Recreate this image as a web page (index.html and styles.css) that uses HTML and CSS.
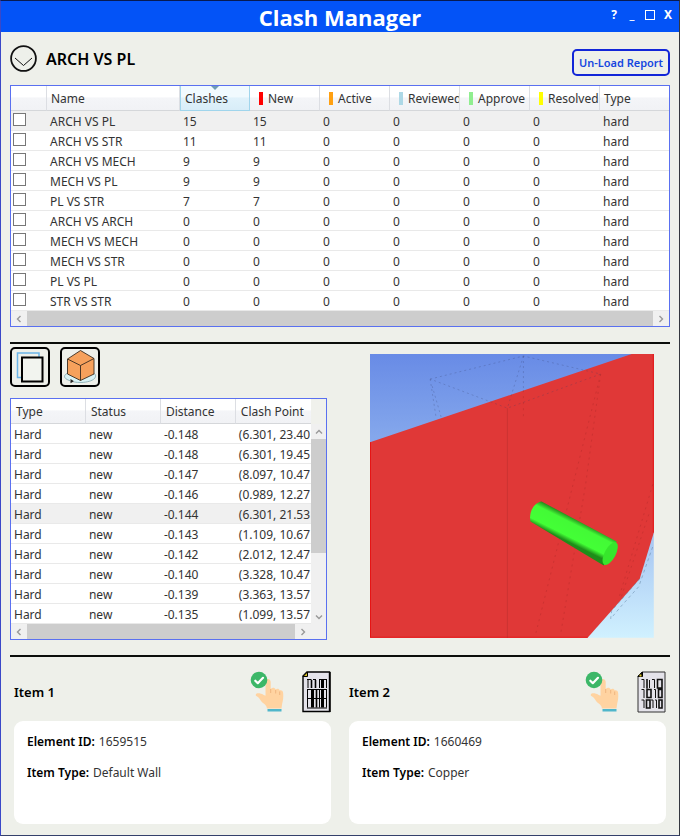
FILE: index.html
```html
<!DOCTYPE html>
<html lang="en">
<head>
<meta charset="utf-8">
<title>Clash Manager</title>
<link rel="stylesheet" href="styles.css">
<script src="app.js" defer></script>
</head>
<body>
<svg class="defs" aria-hidden="true">
  <defs>
    <symbol id="left" viewBox="0 0 8 8"><path d="M5.500 1 2.500 4l3 3"/></symbol>
    <symbol id="right" viewBox="0 0 8 8"><path d="M2.500 1l3 3-3 3"/></symbol>
    <symbol id="up" viewBox="0 0 8 8"><path d="M1 5.500l3-3 3 3"/></symbol>
    <symbol id="down" viewBox="0 0 8 8"><path d="M1 2.500l3 3 3-3"/></symbol>
    <symbol id="hand" viewBox="0 0 34 42">
      <path fill="#ffd3a1" d="M15.500 11c0-4 5-4 5.200 0v7c2-2 4-1.500 5 .5 1.500-1.500 3.500-1 4 1 1.500-.5 3.500 0 3.500 3 .3 4-.2 7-1 10l-.7 5H17c-.5-3-2-4-4-5.500-2-1.500-3-4-4.500-5.500-2-1.500-3-1.500-2.700-3 .5-2 5-1.500 7.500.2l2.200 1z"/>
      <path fill="none" stroke="#efb580" stroke-width="1" d="M20.700 18v4M25.700 19v3.500M29.700 20.500V24"/>
      <path fill="#4fb6cb" d="M17.500 38h14v2.500h-14z"/>
      <circle cx="9" cy="9" r="8.300" fill="#3cb768"/>
      <path fill="none" stroke="#fff" stroke-width="2.200" stroke-linecap="round" stroke-linejoin="round" d="M5.300 9.700l2.500 2.500 5.200-5.400"/>
    </symbol>
  </defs>
</svg>
<div class="window">
  <header class="titlebar">
    <h1>Clash Manager</h1>
    <div class="controls">
      <button type="button">?</button>
      <button type="button">_</button>
      <button type="button" aria-label="Maximize"><span class="square"></span></button>
      <button type="button">X</button>
    </div>
  </header>
  <main class="content">
    <section class="heading">
      <button type="button" class="expander" aria-label="Toggle list">
        <svg viewBox="0 0 28 28"><circle cx="13.500" cy="13.500" r="12.400" stroke-width="1.800"/><path stroke-width="1" d="M5 13l8.500 7.500L22 13"/></svg>
      </button>
      <h2>ARCH VS PL</h2>
      <button type="button" class="unload">Un-Load Report</button>
    </section>

    <section class="grid-box">
      <table class="tests">
        <colgroup><col class="c-check"><col class="c-name"><col class="c-num"><col class="c-num"><col class="c-num"><col class="c-num"><col class="c-num"><col class="c-num"><col></colgroup>
        <thead><tr><th></th><th>Name</th><th class="sorted">Clashes</th><th><i class="tag red"></i>New</th><th><i class="tag orange"></i>Active</th><th><i class="tag blue"></i>Reviewed</th><th><i class="tag green"></i>Approve</th><th><i class="tag yellow"></i>Resolved</th><th>Type</th></tr></thead>
        <tbody id="tests"></tbody>
      </table>
      <div class="hscroll"><button type="button" aria-label="Scroll left"><svg><use href="#left"/></svg></button><span class="thumb"></span><button type="button" aria-label="Scroll right"><svg><use href="#right"/></svg></button></div>
    </section>

    <hr>

    <section class="middle">
      <div class="results">
        <div class="tools">
          <button type="button" aria-label="Overlay view">
            <svg viewBox="0 0 36 36"><path fill="none" stroke="#6bb4e8" stroke-width="1.500" d="M9 28.500H5.500V4H27v4.500"/><path fill="#f2f4ef" stroke="#000" stroke-width="2" d="M10 8.500h20.500v24H10z"/></svg>
          </button>
          <button type="button" aria-label="Rotate model">
            <svg viewBox="0 0 36 36"><path fill="#d9f3f5" stroke="#7fa5ac" stroke-width=".8" d="M5 24.500c-3 1.500-3.500 4 0 6 5 2.500 9 3 14 3 6-.2 11-1.500 13.500-4 2-2.500 1-4.500-1.500-5.500z"/><path fill="none" stroke="#f4f6f1" stroke-width="1" d="M8 31.500l4 1.200"/><path fill="#222" d="m8.500 30 3.500 2.200-3.500 2z"/><path fill="#f6a15c" stroke="#3a2c20" stroke-width=".9" stroke-linejoin="round" d="M18.500 1.500 32 9.500V25l-13.500 6.500L5.500 25V10z"/><path fill="none" stroke="#3a2c20" stroke-width=".9" d="M5.500 10l13 6.500L32 9.500M18.500 16.500v15"/></svg>
          </button>
        </div>
        <div class="grid-box">
          <div class="scroll-row">
            <table class="clashes">
              <colgroup><col><col><col><col></colgroup>
              <thead><tr><th>Type</th><th>Status</th><th>Distance</th><th>Clash Point</th></tr></thead>
              <tbody id="clashes"></tbody>
            </table>
            <div class="vscroll"><button type="button" aria-label="Scroll up"><svg><use href="#up"/></svg></button><span class="track"><span class="thumb"></span></span><button type="button" aria-label="Scroll down"><svg><use href="#down"/></svg></button></div>
          </div>
          <div class="hscroll"><button type="button" aria-label="Scroll left"><svg><use href="#left"/></svg></button><span class="thumb"></span><button type="button" aria-label="Scroll right"><svg><use href="#right"/></svg></button><span class="corner"></span></div>
        </div>
      </div>
      <svg class="viewer" viewBox="0 0 283 283" role="img" aria-label="3D view of the clash">
        <defs>
          <linearGradient id="sky" x1="0" y1="0" x2="0" y2="1"><stop offset="0" stop-color="#688be6"/><stop offset=".3" stop-color="#85a8ec"/><stop offset=".68" stop-color="#abcaf3"/><stop offset="1" stop-color="#d0f1ff"/></linearGradient>
          <linearGradient id="pipe" gradientUnits="userSpaceOnUse" x1="210" y1="166" x2="199" y2="188"><stop offset="0" stop-color="#217d19"/><stop offset=".25" stop-color="#43fa36"/><stop offset=".8" stop-color="#43ff36"/><stop offset="1" stop-color="#1f8d19"/></linearGradient>
        </defs>
        <path fill="url(#sky)" d="M0 0h283v283H0z"/>
        <path fill="#e03837" d="M0 88 261 0h22v178l-14 46-52 59H0z"/>
        <path fill="none" stroke="#e61414" stroke-width="1" d="M.5 88v194.500H217M282.500 0v178"/>
        <g fill="none" stroke="#333b66" stroke-width=".6" stroke-dasharray="2 3" opacity=".4">
          <path d="M60 25 153 2l77 18-93 34zM60 25l6 39M62 32l9 31M153 2v34M153 2l-16 52"/>
        </g>
        <g fill="none" stroke="#8f2020" stroke-width=".8" opacity=".3">
          <path d="M137 54v229"/>
          <path stroke-dasharray="2 4" d="M230 20l-65 260M230 20l-15 110-25 150M282 130l-34 114M278 160l-28 84M153 36v30"/>
        </g>
        <path fill="none" stroke="#5d7f9e" stroke-width=".8" stroke-dasharray="3 3" opacity=".6" d="m269 224-28 32-1 8 10-12 18-20 14-40"/>
        <path fill="url(#pipe)" d="m171 147 75 40-13 24-73-44c-2-10 4-19 11-20z"/>
        <ellipse cx="239.500" cy="199" rx="5.500" ry="12.500" transform="rotate(28 239.500 199)" fill="#37e62c"/>
      </svg>
    </section>

    <hr>

    <section class="items">
      <article class="item">
        <header>
          <h3>Item 1</h3>
          <button type="button" class="pick" aria-label="Select item 1"><svg><use href="#hand"/></svg></button>
          <button type="button" class="sheet" aria-label="Item 1 properties">
            <svg viewBox="0 0 29 42"><path fill="#e4e3ea" stroke="#000" stroke-width="1.400" d="M5 1h22.500v39.500H1V5z"/><path fill="#d8c321" stroke="#000" stroke-width="1" d="M1 5.500 5.500 1v4.500z"/><path stroke="#000" stroke-width="1.500" d="M28 1v40"/><g fill="none" stroke="#000"><path d="M5 8.500h4.500M11 8.500h3M17 8.500h8M5 18.500h20M5 27.500h20M5 37h20"/><path d="M6 9v8M17.500 9v8M5.500 19v8M17.500 19v8M5.500 28v8.500M17.500 28v8.500M24.500 9v8M24.500 19v8M24.500 28v8.500"/><path stroke-width="1.600" d="M9.500 9v8M13.500 9v8M14.500 19v8M14.500 28v8.500"/><path stroke-width="3" d="M20.500 9v8M10.500 19v8M20.500 19v8M10.500 28v8.500M20.500 28v8.500"/></g></svg>
          </button>
        </header>
        <dl class="card"><div><dt>Element ID:</dt> <dd>1659515</dd></div><div><dt>Item Type:</dt> <dd>Default Wall</dd></div></dl>
      </article>
      <article class="item">
        <header>
          <h3>Item 2</h3>
          <button type="button" class="pick" aria-label="Select item 2"><svg><use href="#hand"/></svg></button>
          <button type="button" class="sheet" aria-label="Item 2 properties">
            <svg viewBox="0 0 29 42"><path fill="#e4e3ea" stroke="#333" stroke-width="1" d="M5 1h23v40H1V5z"/><path fill="#000" stroke="#000" d="M1 5.500 5.500 1v4.500z"/><path fill="#d8c321" d="M2.500 3.500h2v2h-2z"/><g fill="none" stroke="#111"><path stroke-width="1" d="M4.500 8.500H7V17M15 8.500h2.500V17M4.500 18.500H7V27M17 18.500h1.500V27M4.500 29H7v8M14 29h2v8M18 29h1.500v8M12.500 9v8"/><path stroke-width="1.600" d="M10 8v9.500M20.500 8.500H25V17h-4.500zM10 18.500h4v8h-4zM21.500 18.500H25v8h-3.500zM9.500 29H13v8H9.500zM22 29h3v8h-3z"/></g></svg>
          </button>
        </header>
        <dl class="card"><div><dt>Element ID:</dt> <dd>1660469</dd></div><div><dt>Item Type:</dt> <dd>Copper</dd></div></dl>
      </article>
    </section>
  </main>
</div>
</body>
</html>
```
FILE: styles.css
```css
* { box-sizing: border-box; }
body {
  margin: 0;
  font-family: "Noto Sans", "Open Sans", sans-serif;
  font-size: 12px;
  line-height: 16px;
  color: #333;
  background: #eef0ea;
}
h1, h2, h3, dl, dd { margin: 0; }
button { margin: 0; padding: 0; border: 0; background: none; font: inherit; color: inherit; }
svg { display: block; }
.defs { position: absolute; width: 0; height: 0; }

.window {
  min-height: 100vh;
  border: 1px solid #33363f;
  border-top-color: #071a52;
  border-left-color: #3a48c8;
  border-bottom-color: #34406b;
}
.titlebar {
  position: relative;
  height: 31px;
  background: #0353f7;
  color: #fff;
  text-align: center;
}
.titlebar h1 { font-family: "Open Sans", sans-serif; font-size: 22px; line-height: 32px; font-weight: 700; }
.controls { position: absolute; top: 4px; right: 2px; display: flex; font-weight: 700; }
.controls button { width: 18px; height: 20px; display: grid; place-items: center; }
.square { width: 10px; height: 10px; border: 1px solid #fff; }

.content { padding: 0 9px; }
.heading { display: flex; align-items: center; height: 53px; }
.expander svg { width: 28px; height: 28px; fill: none; stroke: #111; }
.heading h2 { margin-left: 8px; font-size: 16px; line-height: 20px; font-weight: 600; color: #000; }
.unload {
  width: 98px;
  height: 27px;
  margin: 8px 0 0 auto;
  border: 2px solid #1226d8;
  border-radius: 5px;
  color: #1546e0;
  font-size: 11px;
  font-weight: 600;
  white-space: nowrap;
}

.grid-box { border: 1px solid #5a70f0; background: #fff; }
table { width: 100%; border-collapse: separate; border-spacing: 0; table-layout: fixed; }
th, td { padding: 2px 3px 0; text-align: left; font-weight: 400; overflow: hidden; white-space: nowrap; }
th {
  height: 25px;
  padding-left: 5px;
  border-right: 1px solid #dcdee3;
  border-bottom: 1px solid #d5d7da;
  background: linear-gradient(#fff 45%, #f4f5f8 50%, #f1f2f5);
}
th:last-child { border-right: 0; }
td { height: 20px; border-bottom: 1px solid #e9e9e9; background: #fff; }
tr.selected td { background: #f0f0f0; }
.c-check { width: 36px; }
.c-name { width: 133px; }
.c-num { width: 70px; }
.tests th { padding-left: 4px; }
.tests .sorted {
  position: relative;
  border: 1px solid #a0d5ec;
  border-top: 0;
  background: linear-gradient(#f1fafe 45%, #e0f2fb 50%, #d8edf8);
}
.sorted::before {
  content: "";
  position: absolute;
  top: 0;
  left: 50%;
  border: 4px solid transparent;
  border-top-color: #6f9cb5;
  border-bottom: 0;
  translate: -50%;
}
.tag { display: inline-block; width: 4px; height: 13px; margin: 0 5px; vertical-align: -2px; }
.red { background: #f00; }
.orange { background: #ffa011; }
.blue { background: #add8e6; }
.green { background: #90ee90; }
.yellow { background: #ff0; }
.tests input {
  appearance: none;
  display: block;
  width: 13px;
  height: 13px;
  margin: 0 0 3px;
  border: 1px solid #777;
  background: #fff;
}
.tests td:first-child { padding: 0 0 0 2px; }

.hscroll { display: flex; height: 15px; background: #f0f0f0; }
.hscroll button, .vscroll button { flex: none; width: 16px; height: 15px; display: grid; place-items: center; }
.hscroll svg, .vscroll svg { width: 8px; height: 8px; fill: none; stroke: #999; stroke-width: 1.4px; }
.hscroll .thumb { flex: 1; background: #cdcdcd; }
.corner { width: 15px; }
.scroll-row { display: flex; background: #f0f1ec; }
.vscroll { display: flex; flex: none; flex-direction: column; width: 15px; margin-top: 25px; background: #f0f0f0; }
.vscroll .track { flex: 1; }
.vscroll .track .thumb { display: block; height: 67%; background: #cdcdcd; }

hr { height: 2px; margin: 15px 0 3px; border: 0; background: #0b0e0b; }
.middle { display: flex; align-items: flex-start; }
.results { flex: none; width: 48%; }
.tools { display: flex; gap: 10px; margin-bottom: 11px; }
.tools button { width: 40px; height: 40px; border: 2px solid #000; border-radius: 5px; }
.tools svg { width: 36px; height: 36px; }
.viewer { width: 43%; height: auto; margin: 7px 16px 0 auto; }

.items { display: grid; grid-template-columns: 1fr 1fr; gap: 18px; padding: 11px 4px; }
.item header { display: flex; align-items: center; height: 42px; margin-bottom: 8px; }
.item h3 { margin-right: auto; font-size: 13px; font-weight: 600; color: #000; }
.pick svg { width: 34px; height: 42px; }
.sheet { margin-left: 18px; }
.sheet svg { width: 29px; height: 42px; }
.card { min-height: 103px; padding: 13px; border-radius: 9px; background: #fff; }
.card div { display: flex; gap: 4px; margin-bottom: 15px; }
.card dt { font-weight: 600; color: #000; }
```
FILE: app.js
```js
const tests = [
  ['ARCH VS PL', 15], ['ARCH VS STR', 11], ['ARCH VS MECH', 9], ['MECH VS PL', 9], ['PL VS STR', 7],
  ['ARCH VS ARCH', 0], ['MECH VS MECH', 0], ['MECH VS STR', 0], ['PL VS PL', 0], ['STR VS STR', 0],
];
const clashes = [
  ['-0.148', '(6.301, 23.40'], ['-0.148', '(6.301, 19.45'], ['-0.147', '(8.097, 10.47'], ['-0.146', '(0.989, 12.27'],
  ['-0.144', '(6.301, 21.53'], ['-0.143', '(1.109, 10.67'], ['-0.142', '(2.012, 12.47'], ['-0.140', '(3.328, 10.47'],
  ['-0.139', '(3.363, 13.57'], ['-0.135', '(1.099, 13.57'],
];
const cells = (values) => values.map((v) => `<td>${v}</td>`).join('');

document.getElementById('tests').innerHTML = tests.map(([name, n], i) =>
  `<tr${i === 0 ? ' class="selected"' : ''}><td><input type="checkbox" aria-label="${name}"></td>${cells([name, n, n, 0, 0, 0, 0, 'hard'])}</tr>`).join('');
document.getElementById('clashes').innerHTML = clashes.map(([distance, point], i) =>
  `<tr${i === 4 ? ' class="selected"' : ''}>${cells(['Hard', 'new', distance, point])}</tr>`).join('');
```
